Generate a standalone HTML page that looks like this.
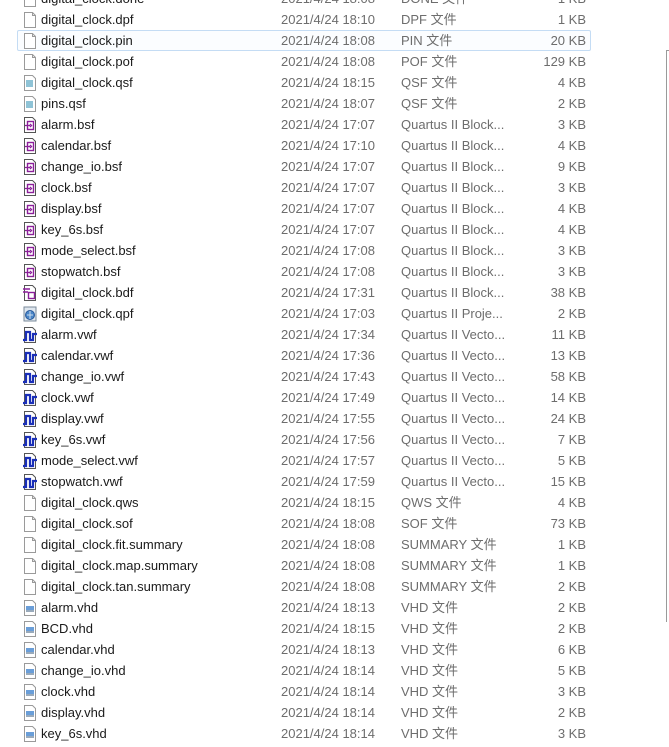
<!DOCTYPE html>
<html><head><meta charset="utf-8"><style>
body{margin:0;width:669px;height:747px;background:#fff;overflow:hidden;position:relative;font-family:"Liberation Sans","Noto Sans CJK SC",sans-serif;font-size:13px}
.r{position:absolute;left:0;height:21px;width:669px}
.r span{position:absolute;top:3px;line-height:15px;white-space:nowrap}
.n{left:41px;color:#1a1a1a}
.d{left:281px;color:#6d6d6d}
.t{left:401px;color:#6d6d6d}
.s{right:83px;color:#6d6d6d}
.r svg{position:absolute;left:22px;top:2px}
.sel{position:absolute;left:17px;top:30px;width:572px;height:19px;border:1px solid #c4dcf4;border-radius:2px;background:#fbfdff}
.sb{position:absolute;left:666px;top:50px;width:1px;height:572px;background:#9a9a9a}
.sb2{position:absolute;left:666px;top:50px;width:3px;height:1px;background:#9a9a9a}
</style></head><body>
<div class="sel"></div><div class="sb"></div><div class="sb2"></div>
<svg width="0" height="0" style="position:absolute"><defs>
<symbol id="f" viewBox="0 0 16 18"><path d="M2.5 1.5h8l3 3v12h-11z" fill="#fff" stroke="#9a9a9a"/><path d="M10.5 1.5v3h3" fill="none" stroke="#9a9a9a"/></symbol>
<symbol id="q" viewBox="0 0 16 18"><path d="M2.5 1.5h8l3 3v12h-11z" fill="#fff" stroke="#9a9a9a"/><rect x="4" y="6" width="7" height="7" fill="#8fc3d6"/></symbol>
<symbol id="b" viewBox="0 0 16 18"><path d="M2.5 1.5h8l3 3v12h-11z" fill="#fff" stroke="#555"/><rect x="5.5" y="5.5" width="6" height="8" fill="none" stroke="#8b1f9a" stroke-width="1.4"/><path d="M3 9.5h5M8 8l1.5 1.5L8 11" fill="none" stroke="#8b1f9a" stroke-width="1.3"/></symbol>
<symbol id="bd" viewBox="0 0 16 18"><path d="M2.5 1.5h8l3 3v12h-11z" fill="#fff" stroke="#555"/><path d="M1 5h7M1 8h5" stroke="#8b1f9a" stroke-width="1.4"/><rect x="6.5" y="8.5" width="6" height="6" fill="none" stroke="#8b1f9a" stroke-width="1.4"/></symbol>
<symbol id="qp" viewBox="0 0 16 18"><rect x="2" y="2" width="12" height="14" fill="#dfe7ef" stroke="#7a8a9a"/><circle cx="8" cy="10" r="4.5" fill="#4a86c8" stroke="#2a5a9a"/><path d="M5 10h6M8 6v8" stroke="#cde" stroke-width="1"/></symbol>
<symbol id="v" viewBox="0 0 16 18"><path d="M2.5 1.5h8l3 3v12h-11z" fill="#fff" stroke="#555"/><path d="M1 14h3V6h4v8h3V8h4" fill="none" stroke="#1a2fb8" stroke-width="2.2"/></symbol>
<symbol id="h" viewBox="0 0 16 18"><path d="M2.5 1.5h8l3 3v12h-11z" fill="#fff" stroke="#9a9a9a"/><rect x="4" y="7" width="8" height="6" fill="#6a9ed8"/><rect x="4" y="11" width="8" height="2" fill="#9ab"/></symbol>
</defs></svg>
<div id="list"></div>
<script>
var rows=[
["f","digital_clock.done","2021/4/24 18:08","DONE 文件","1 KB"],
["f","digital_clock.dpf","2021/4/24 18:10","DPF 文件","1 KB"],
["f","digital_clock.pin","2021/4/24 18:08","PIN 文件","20 KB"],
["f","digital_clock.pof","2021/4/24 18:08","POF 文件","129 KB"],
["q","digital_clock.qsf","2021/4/24 18:15","QSF 文件","4 KB"],
["q","pins.qsf","2021/4/24 18:07","QSF 文件","2 KB"],
["b","alarm.bsf","2021/4/24 17:07","Quartus II Block...","3 KB"],
["b","calendar.bsf","2021/4/24 17:10","Quartus II Block...","4 KB"],
["b","change_io.bsf","2021/4/24 17:07","Quartus II Block...","9 KB"],
["b","clock.bsf","2021/4/24 17:07","Quartus II Block...","3 KB"],
["b","display.bsf","2021/4/24 17:07","Quartus II Block...","4 KB"],
["b","key_6s.bsf","2021/4/24 17:07","Quartus II Block...","4 KB"],
["b","mode_select.bsf","2021/4/24 17:08","Quartus II Block...","3 KB"],
["b","stopwatch.bsf","2021/4/24 17:08","Quartus II Block...","3 KB"],
["bd","digital_clock.bdf","2021/4/24 17:31","Quartus II Block...","38 KB"],
["qp","digital_clock.qpf","2021/4/24 17:03","Quartus II Proje...","2 KB"],
["v","alarm.vwf","2021/4/24 17:34","Quartus II Vecto...","11 KB"],
["v","calendar.vwf","2021/4/24 17:36","Quartus II Vecto...","13 KB"],
["v","change_io.vwf","2021/4/24 17:43","Quartus II Vecto...","58 KB"],
["v","clock.vwf","2021/4/24 17:49","Quartus II Vecto...","14 KB"],
["v","display.vwf","2021/4/24 17:55","Quartus II Vecto...","24 KB"],
["v","key_6s.vwf","2021/4/24 17:56","Quartus II Vecto...","7 KB"],
["v","mode_select.vwf","2021/4/24 17:57","Quartus II Vecto...","5 KB"],
["v","stopwatch.vwf","2021/4/24 17:59","Quartus II Vecto...","15 KB"],
["f","digital_clock.qws","2021/4/24 18:15","QWS 文件","4 KB"],
["f","digital_clock.sof","2021/4/24 18:08","SOF 文件","73 KB"],
["f","digital_clock.fit.summary","2021/4/24 18:08","SUMMARY 文件","1 KB"],
["f","digital_clock.map.summary","2021/4/24 18:08","SUMMARY 文件","1 KB"],
["f","digital_clock.tan.summary","2021/4/24 18:08","SUMMARY 文件","2 KB"],
["h","alarm.vhd","2021/4/24 18:13","VHD 文件","2 KB"],
["h","BCD.vhd","2021/4/24 18:15","VHD 文件","2 KB"],
["h","calendar.vhd","2021/4/24 18:13","VHD 文件","6 KB"],
["h","change_io.vhd","2021/4/24 18:14","VHD 文件","5 KB"],
["h","clock.vhd","2021/4/24 18:14","VHD 文件","3 KB"],
["h","display.vhd","2021/4/24 18:14","VHD 文件","2 KB"],
["h","key_6s.vhd","2021/4/24 18:14","VHD 文件","3 KB"]];
var h="";
rows.forEach(function(r,i){var top=-12+21*i;
h+='<div class="r" style="top:'+top+'px"><svg width="16" height="18"><use href="#'+r[0]+'"/></svg><span class="n">'+r[1]+'</span><span class="d">'+r[2]+'</span><span class="t">'+r[3]+'</span><span class="s">'+r[4]+'</span></div>';});
document.getElementById("list").innerHTML=h;
</script>
</body></html>
